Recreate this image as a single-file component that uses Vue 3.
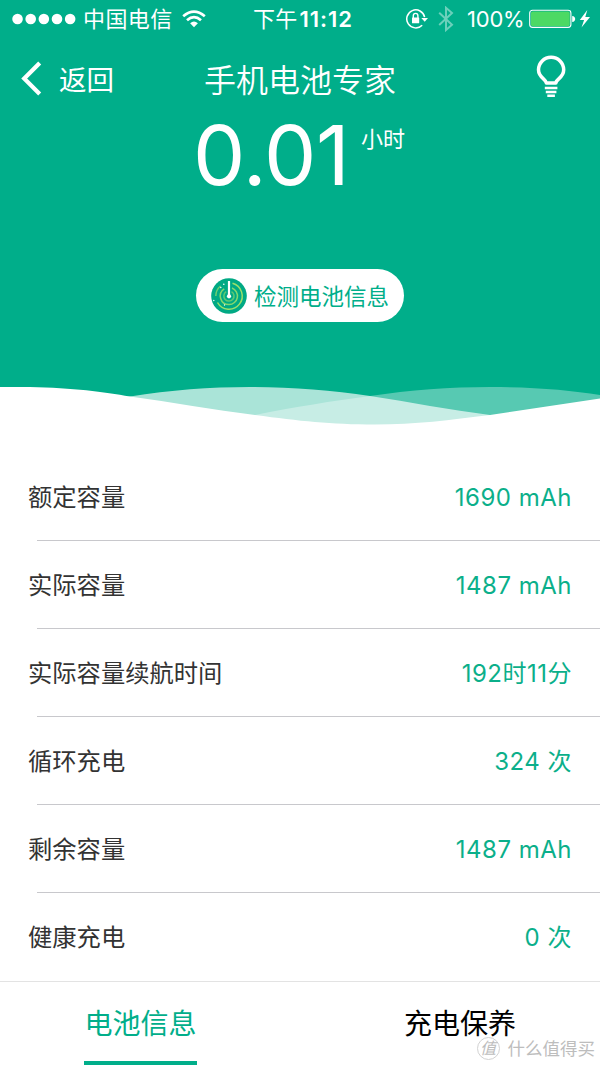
<script setup>
const rows = [
  { label: '额定容量', value: '1690 mAh' },
  { label: '实际容量', value: '1487 mAh' },
  { label: '实际容量续航时间', value: '192时11分' },
  { label: '循环充电', value: '324 次' },
  { label: '剩余容量', value: '1487 mAh' },
  { label: '健康充电', value: '0 次' },
]
</script>

<template>
  <div class="screen">
    <header class="hero">
      <div class="status">
        <div class="carrier">
          <svg class="dots" width="64" height="12" viewBox="0 0 64 12" fill="#fff">
            <circle v-for="i in 5" :key="i" :cx="i * 13.15 - 7.6" cy="6" r="5.3" />
          </svg>
          <span class="carrier-name">中国电信</span>
          <svg width="24" height="18" viewBox="0 0 24 18" fill="none" stroke="#fff" stroke-width="2.7">
            <path d="M1.2 6.2Q12-3 22.8 6.2M5 10.2Q12 4 19 10.2" />
            <path d="M8.1 13.2Q12 9.8 15.9 13.2L12 17.2Z" fill="#fff" stroke="none" />
          </svg>
        </div>
        <div class="clock">下午<b>11:12</b></div>
        <div class="indicators">
          <svg class="lock" width="23" height="20" viewBox="0 0 23 20" fill="none" stroke="#fff">
            <path d="M18.6 8.2A9 9 0 1 0 16.2 16.2" stroke-width="1.5" />
            <path d="M15.3 9H22L18.7 12.7Z" fill="#fff" stroke="none" />
            <rect x="6" y="8.5" width="7.2" height="5.8" rx=".6" fill="#fff" stroke="none" />
            <path d="M7.3 9V6.7a2.3 2.3 0 0 1 4.6 0V9" stroke-width="1.4" />
          </svg>
          <svg class="bluetooth" width="16" height="26" viewBox="0 0 16 26" fill="none" stroke="#fff" stroke-width="2">
            <path d="M1.2 6.7L14 18.7L8 24V1.8L14 7L1.2 19" />
          </svg>
          <span class="percent">100%</span>
          <svg class="battery" width="47" height="20" viewBox="0 0 47 20">
            <rect x=".7" y="1.2" width="41.2" height="17.2" rx="2.8" fill="none" stroke="#fff" stroke-width="1.1" />
            <rect x="2" y="2.4" width="38.7" height="14.8" rx="1.7" fill="#4cd964" />
            <path d="M43.2 7C47.2 7 47.2 13 43.2 13Z" fill="#fff" />
          </svg>
          <svg class="bolt" width="12" height="18" viewBox="0 0 12 18" fill="#fff">
            <path d="M8.3 0L.8 10H5.1L2.5 17.6L11 7H6.3Z" />
          </svg>
        </div>
      </div>

      <nav class="nav">
        <div class="back">
          <svg width="22" height="36" viewBox="0 0 22 36" fill="none" stroke="#fff" stroke-width="4.2">
            <path d="M18.7 2.9L3.2 18.5L18.7 34.1" />
          </svg>
          <span>返回</span>
        </div>
        <h1 class="title">手机电池专家</h1>
        <div class="tip">
          <svg width="30" height="44" viewBox="0 0 30 44" fill="none" stroke="#fff">
            <path d="M10.3 28C10.3 24 2.5 23 2.5 14.8A12.6 12.6 0 0 1 27.7 14.8C27.7 23 19.9 24 19.9 28Z" stroke-width="3.5" stroke-linejoin="round" />
            <path d="M8.8 33H21.4M9.8 37H20.4M11.3 40.8H18.9" stroke-width="2.4" />
          </svg>
        </div>
      </nav>

      <div class="reading">
        <span class="number">0.01</span>
        <span class="unit">小时</span>
      </div>

      <button class="detect">
        <svg width="36" height="36" viewBox="0 0 36 36" fill="none">
          <circle cx="18" cy="18" r="17.8" fill="#00a984" />
          <g stroke="#9be06a" stroke-width="1.5">
            <path d="M21.5 5.3A13.2 13.2 0 1 1 6.5 24.5" />
            <path d="M9.5 8A13.2 13.2 0 0 0 4.8 18" opacity=".7" />
            <path d="M21 10A8.6 8.6 0 0 1 18 26.6A8.6 8.6 0 0 1 13.2 10.8" opacity=".85" />
            <path d="M20.5 13.6A5.1 5.1 0 1 1 15.2 13.7" opacity=".6" />
          </g>
          <path d="M16.9 3H19.1V18H16.9Z" fill="#fff" />
          <circle cx="18" cy="18.3" r="2.1" fill="#fff" />
          <g fill="#fff">
            <circle cx="12.8" cy="6.2" r=".8" />
            <circle cx="9.8" cy="9.5" r=".7" />
            <circle cx="2.8" cy="22.5" r=".7" />
            <circle cx="13.5" cy="27" r=".7" />
          </g>
        </svg>
        <span>检测电池信息</span>
      </button>

      <svg class="waves" width="600" height="66" viewBox="0 0 600 66">
        <path d="M0 66V56C120 47 180 40 255 28C295 20 332 14 370 9C410 3 450 0 490 0C535 0 570 3 600 8V66Z" fill="#fff" fill-opacity=".34" />
        <path d="M0 66V28L130 9.5C170 3 210 0 250 0C290 0 332 3 370 9C410 15 450 23 490 28L600 48V66Z" fill="#fff" fill-opacity=".665" />
        <path d="M0 0C60 -1 98 4 130 9.5C172 15 213 23 255 28C300 34 330 37.5 375 37.5C416 37.5 450 33 490 28L600 11.5V66H0Z" fill="#fff" />
      </svg>
    </header>

    <main class="list">
      <div v-for="row in rows" :key="row.label" class="row">
        <span class="label">{{ row.label }}</span>
        <span class="value">{{ row.value }}</span>
      </div>
    </main>

    <footer class="tabs">
      <div class="tab active"><span>电池信息</span></div>
      <div class="tab"><span>充电保养</span></div>
      <div class="watermark">
        <span class="seal">值</span>
        <span>什么值得买</span>
      </div>
    </footer>
  </div>
</template>

<style>
body {
  margin: 0;
  background: #fff;
}
</style>

<style scoped>
.screen {
  width: 600px;
  height: 1065px;
  overflow: hidden;
  background: #fff;
  font-family: Inter, "Noto Sans CJK SC", sans-serif;
  font-weight: 390;
}
svg {
  display: block;
  flex: none;
}
.hero {
  display: flex;
  flex-direction: column;
  height: 453px;
  background: #00ae8a;
  color: #fff;
}
.status {
  display: grid;
  grid-template-columns: 205px 196px 199px;
  height: 38px;
  align-items: center;
  font-size: 22px;
  line-height: 38px;
  white-space: nowrap;
}
.carrier {
  display: flex;
  align-items: center;
  padding-left: 12px;
}
.carrier-name {
  margin: 0 9px 0 7px;
  letter-spacing: .4px;
}
.clock {
  text-align: center;
  font-weight: 400;
  letter-spacing: .2px;
}
.clock b {
  margin-left: 2px;
  font-weight: 560;
  letter-spacing: 1px;
}
.indicators {
  display: flex;
  align-items: center;
  padding-left: 5px;
}
.bluetooth {
  margin-left: 9px;
  opacity: .42;
}
.percent {
  width: 57px;
  margin-left: 13px;
  letter-spacing: -.2px;
}
.battery {
  margin-left: 5px;
}
.bolt {
  margin-left: 3px;
}
.nav {
  display: grid;
  grid-template-columns: 180px 240px 180px;
  align-items: center;
  height: 80px;
}
.back {
  display: flex;
  align-items: center;
  gap: 16px;
  padding-left: 21px;
  font-size: 27.5px;
}
.title {
  margin: 0;
  text-align: center;
  font-size: 32px;
  font-weight: 350;
}
.tip {
  display: flex;
  padding: 0 0 2px 116px;
}
.reading {
  display: flex;
  align-items: flex-start;
  height: 151px;
  padding-left: 193px;
}
.number {
  width: 168px;
  font-size: 83px;
  line-height: 75px;
  font-weight: 400;
  letter-spacing: -.5px;
}
.unit {
  font-size: 22px;
  line-height: 43px;
}
.detect {
  display: flex;
  align-items: center;
  align-self: center;
  gap: 7px;
  width: 208px;
  height: 53px;
  padding: 0 0 0 15px;
  border: 0;
  border-radius: 27px;
  background: #fff;
  color: #00ae8a;
  font: inherit;
  font-size: 22.5px;
  white-space: nowrap;
}
.detect span {
  padding-bottom: 2px;
}
.waves {
  margin-top: auto;
}
.row {
  display: flex;
  justify-content: space-between;
  align-items: center;
  height: 88px;
  padding: 0 28px;
  box-sizing: border-box;
  background: linear-gradient(#c8c8cc, #c8c8cc) 37px 100% / 563px 1px no-repeat;
  font-size: 24.3px;
  line-height: 36px;
}
.row:last-child {
  background: none;
}
.label {
  color: #333;
}
.value {
  padding-top: 1px;
  color: #0baf8a;
  font-size: 24px;
  letter-spacing: .5px;
}
.tabs {
  position: relative;
  display: grid;
  grid-template-columns: 281px 319px;
  box-sizing: border-box;
  height: 84px;
  border-top: 1px solid #e3e3e3;
  font-size: 28px;
  color: #000;
}
.tab {
  display: flex;
  justify-content: center;
}
.tab + .tab {
  padding-left: 39px;
}
.tab span {
  box-sizing: border-box;
  height: 83px;
  padding-top: 28px;
  line-height: 28px;
}
.active span {
  border-bottom: 4px solid #00ae8a;
  color: #00ae8a;
}
.watermark {
  position: absolute;
  right: 5px;
  bottom: 5px;
  display: flex;
  align-items: center;
  gap: 8px;
  color: #bdbdbd;
  font-size: 17.5px;
  line-height: 23px;
  white-space: nowrap;
}
.seal {
  width: 21px;
  height: 21px;
  border: 1px solid #d2d2d2;
  border-radius: 50%;
  font-size: 16px;
  font-style: italic;
  line-height: 20px;
  text-align: center;
}
</style>
